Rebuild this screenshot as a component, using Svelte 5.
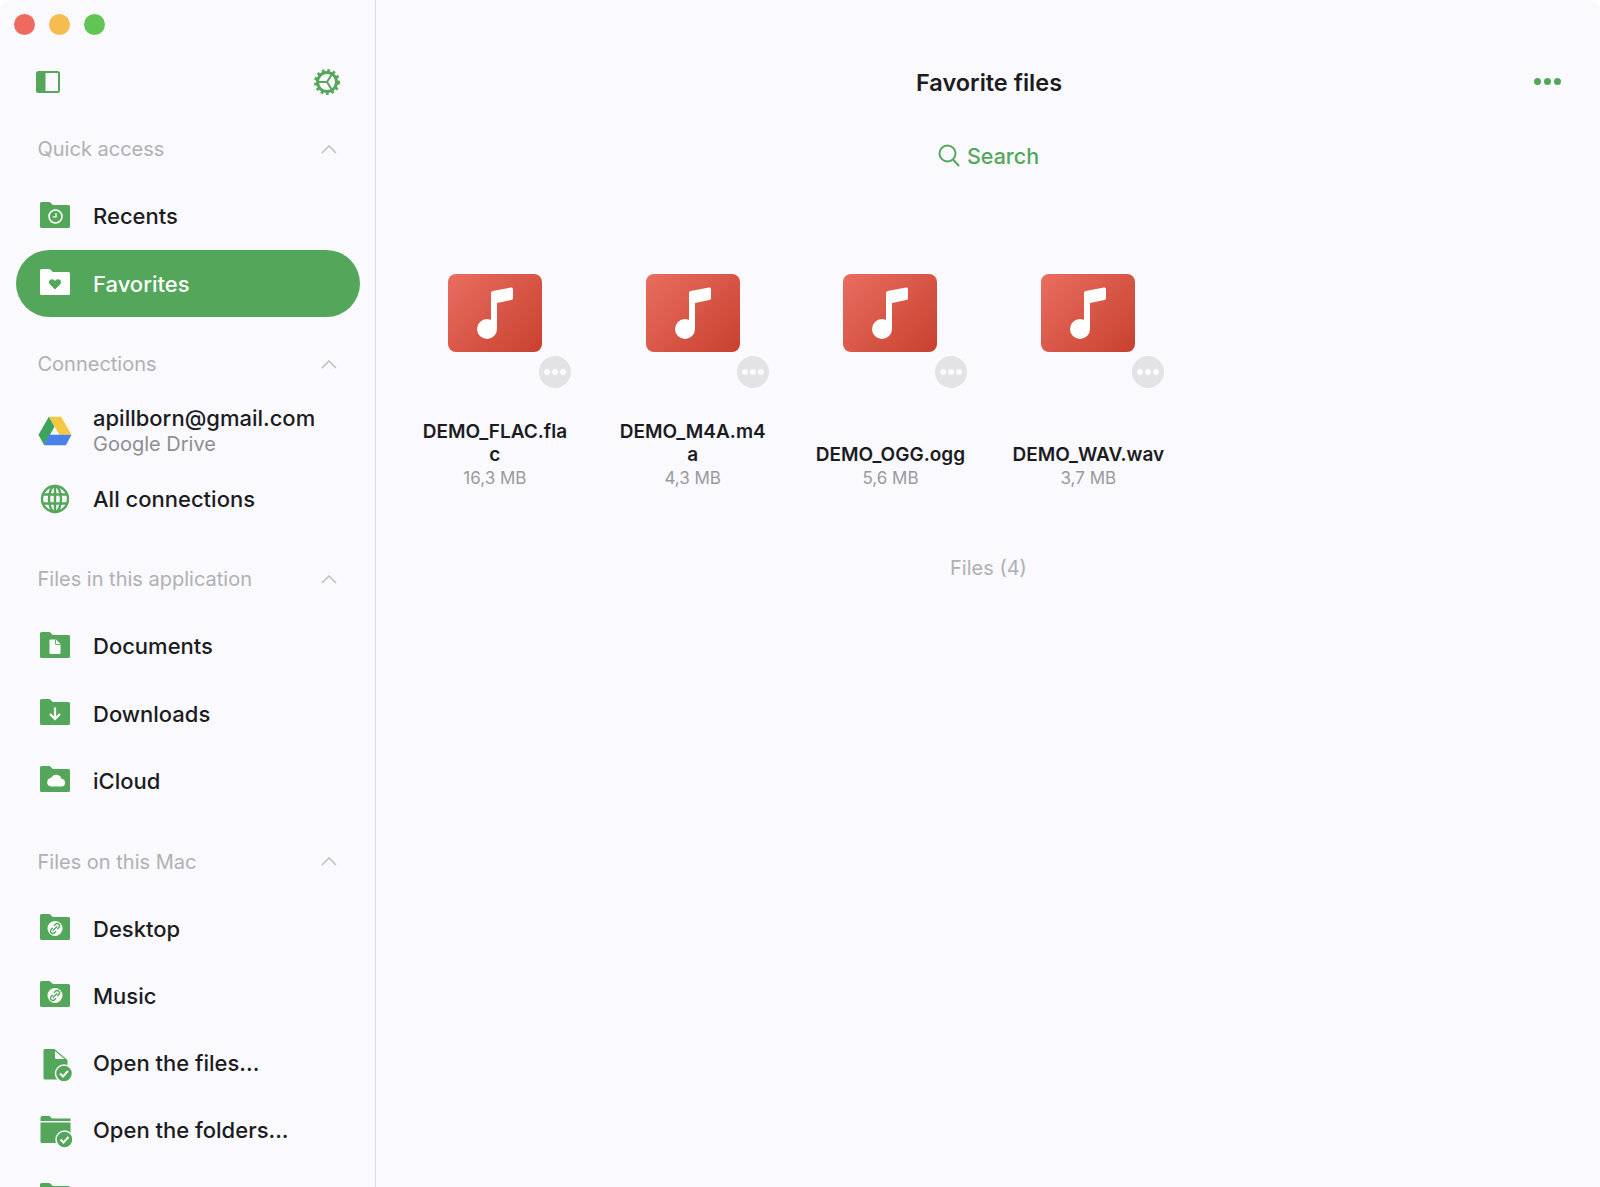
<script lang="ts">
  const sections = [
    { title: 'Quick access', items: [
      { icon: 'clock', label: 'Recents' },
      { icon: 'heart', label: 'Favorites', active: true }
    ] },
    { title: 'Connections', items: [
      { icon: 'drive', label: 'apillborn@gmail.com', sub: 'Google Drive' },
      { icon: 'globe', label: 'All connections' }
    ] },
    { title: 'Files in this application', items: [
      { icon: 'doc', label: 'Documents' },
      { icon: 'down', label: 'Downloads' },
      { icon: 'cloud', label: 'iCloud' }
    ] },
    { title: 'Files on this Mac', items: [
      { icon: 'link', label: 'Desktop' },
      { icon: 'link', label: 'Music' },
      { icon: 'filecheck', label: 'Open the files...' },
      { icon: 'foldercheck', label: 'Open the folders...' },
      { icon: 'plain', label: '' }
    ] }
  ];

  const files = [
    { name: 'DEMO_FLAC.flac', size: '16,3 MB' },
    { name: 'DEMO_M4A.m4a', size: '4,3 MB' },
    { name: 'DEMO_OGG.ogg', size: '5,6 MB' },
    { name: 'DEMO_WAV.wav', size: '3,7 MB' }
  ];

  const folderIcons = ['clock', 'heart', 'doc', 'down', 'cloud', 'link', 'plain'];
</script>

{#snippet rowIcon(icon, active)}
  {#if folderIcons.includes(icon)}
    {@const ink = active ? '#54a75a' : '#fff'}
    <svg class="folder" class:on={active} width="30" height="26" viewBox="0 0 30 26">
      <path class="body" d="M1.500 0h7.600c.5 0 .9.2 1.200.5L12.800 3H28.500a1.500 1.500 0 0 1 1.500 1.500v20a1.500 1.500 0 0 1-1.500 1.500h-27A1.500 1.500 0 0 1 0 24.500v-23A1.500 1.500 0 0 1 1.500 0z" />
      {#if icon === 'clock'}
        <circle cx="15.500" cy="14.500" r="6.500" fill="none" stroke={ink} stroke-width="1.600" />
        <path d="M16 11v3.800h-3.200" fill="none" stroke={ink} stroke-width="1.300" />
      {:else if icon === 'heart'}
        <path d="M15 20.500l-5-4.900c-1.500-1.600-1.400-3.800.2-4.900 1.600-1 3.600-.5 4.800 1.200 1.200-1.700 3.200-2.200 4.800-1.200 1.600 1.100 1.700 3.300.2 4.900z" fill={ink} />
      {:else if icon === 'doc'}
        <path d="M9.500 8.500a1 1 0 0 1 1-1h5.500l4.500 4.500v9a1 1 0 0 1-1 1h-9a1 1 0 0 1-1-1z" fill={ink} />
        <path d="M15.500 7.500v5h5" fill="none" stroke="#54a75a" stroke-width=".9" />
      {:else if icon === 'down'}
        <path d="M15 8.500v11M10 15l5 5 5-5" fill="none" stroke={ink} stroke-width="2.200" />
      {:else if icon === 'cloud'}
        <path d="M11 20.500h10a3.800 3.800 0 0 0 .6-7.600 5.600 5.600 0 0 0-10.400-1.100A4.400 4.400 0 0 0 7.200 16.500 4.200 4.200 0 0 0 11 20.500z" fill={ink} />
      {:else if icon === 'link'}
        <circle cx="15" cy="14.500" r="7.500" fill={ink} />
        <g fill="none" stroke="#54a75a" stroke-width="1.400" stroke-linecap="round">
          <path d="M13.200 16.300l3.600-3.600" />
          <path d="M12.400 14.200l-1.200 1.300a2.300 2.300 0 0 0 3.300 3.300l1.200-1.200" />
          <path d="M17.600 14.800l1.200-1.300a2.300 2.300 0 0 0-3.300-3.300l-1.200 1.200" />
        </g>
      {/if}
    </svg>
  {:else if icon === 'drive'}
    <svg width="36" height="32" viewBox="0 0 36 32">
      <path d="M11.500 1h13L35.500 20h-12.800z" fill="#f5c842" />
      <path d="M11.500 1L0.500 20l6 11 11-19.500z" fill="#3fa45b" />
      <path d="M11.500 20h24l-6 11H6.500z" fill="#4a80ec" />
    </svg>
  {:else if icon === 'globe'}
    <svg width="30" height="30" viewBox="0 0 30 30" fill="none" stroke="#54a75a" stroke-width="2.400">
      <circle cx="15" cy="15" r="13" />
      <ellipse cx="15" cy="15" rx="6" ry="13" />
      <path d="M15 2v26M3 10.500h24M3 19.500h24" />
    </svg>
  {:else if icon === 'filecheck'}
    <svg class="check-icon" width="33" height="33" viewBox="0 0 33 33">
      <path d="M4.500 1.500A1.500 1.500 0 0 1 6 0h9.500L28.500 11v18a1.500 1.500 0 0 1-1.500 1.500H6A1.500 1.500 0 0 1 4.500 29z" fill="#54a75a" />
      <path d="M16 2v6.500a1.500 1.500 0 0 0 1.500 1.500h8z" fill="#f9f9fe" />
      <circle cx="25" cy="24.500" r="8.500" fill="#54a75a" stroke="#f9f9fe" stroke-width="1.500" />
      <path d="M21 24.500l3 3 5-5.500" fill="none" stroke="#fff" stroke-width="2" />
    </svg>
  {:else if icon === 'foldercheck'}
    <svg class="check-icon" width="33" height="33" viewBox="0 0 33 33">
      <path d="M1.500 1.500A1.500 1.500 0 0 1 3 0h7.500l2.500 2.500h18.500v2.500H1.500z" fill="#54a75a" />
      <path d="M1.500 6.500h30V25.500a1.500 1.500 0 0 1-1.500 1.500H3a1.500 1.500 0 0 1-1.500-1.500z" fill="#54a75a" />
      <circle cx="25.500" cy="23.500" r="8.500" fill="#54a75a" stroke="#f9f9fe" stroke-width="1.500" />
      <path d="M21.500 23.500l3 3 5-5.500" fill="none" stroke="#fff" stroke-width="2" />
    </svg>
  {/if}
{/snippet}

<div class="window">
  <aside class="sidebar">
    <div class="lights">
      <span class="light red"></span>
      <span class="light yellow"></span>
      <span class="light green"></span>
    </div>
    <div class="toolbar">
      <svg width="24" height="22" viewBox="0 0 24 22">
        <rect x="1" y="1" width="22" height="20" rx="1.500" fill="#f9f9fe" stroke="#54a75a" stroke-width="2" />
        <rect x="1" y="1" width="8.500" height="20" fill="#54a75a" />
      </svg>
      <svg class="gear" width="26" height="26" viewBox="0 0 26 26" fill="none" stroke="#54a75a">
        <circle cx="13" cy="13" r="9.500" stroke-width="3" />
        <circle cx="13" cy="13" r="11.500" stroke-width="3" stroke-dasharray="2.600 2.820" />
        <path d="M13 13H4M13 13l5 -8M13 13l5 8" stroke-width="2" />
      </svg>
    </div>

    {#each sections as section}
      <section class="group">
        <div class="group-head">
          <span>{section.title}</span>
          <svg width="16" height="9" viewBox="0 0 16 9" fill="none" stroke="#b9b9bd" stroke-width="1.300">
            <path d="M1 8l7-7 7 7" />
          </svg>
        </div>
        {#each section.items as item}
          <div class="row" class:active={item.active}>
            <span class="row-icon">{@render rowIcon(item.icon, item.active)}</span>
            <div class="row-text">
              <span class="label">{item.label}</span>
              {#if item.sub}<span class="sub">{item.sub}</span>{/if}
            </div>
          </div>
        {/each}
      </section>
    {/each}
  </aside>

  <main class="content">
    <header class="topbar">
      <h1>Favorite files</h1>
      <span class="more"><i></i><i></i><i></i></span>
    </header>
    <div class="search">
      <svg width="22" height="23" viewBox="0 0 22 23" fill="none" stroke="#54a75a" stroke-width="2">
        <circle cx="9.500" cy="9.500" r="8" />
        <path d="M15 15.500l6 6.500" />
      </svg>
      <span>Search</span>
    </div>

    <div class="grid">
      {#each files as file}
        <div class="tile">
          <div class="thumb">
            <svg width="36" height="52" viewBox="0 0 36 52">
              <path d="M14 6a2 2 0 0 1 1.600-2L34 .5a1.700 1.700 0 0 1 2 1.700V11a2 2 0 0 1-1.600 2L20 16V42h-6z" fill="#fff" />
              <circle cx="10" cy="42" r="10" fill="#fff" />
            </svg>
          </div>
          <span class="tile-more"><i></i><i></i><i></i></span>
          <div class="name">{file.name}</div>
          <div class="size">{file.size}</div>
        </div>
      {/each}
    </div>

    <div class="count">Files (4)</div>
  </main>
</div>

<style>
  :global(body) {
    background: #fff;
  }
  .window {
    display: flex;
    width: 1600px;
    height: 1187px;
    overflow: hidden;
    background: #f9f9fe;
    border-radius: 10px 10px 0 0;
    font-family: Inter, "Liberation Sans", sans-serif;
  }
  .sidebar {
    width: 375px;
    flex: none;
    box-sizing: content-box;
    border-right: 1.500px solid #dcdce0;
    overflow: hidden;
  }
  .lights {
    display: flex;
    gap: 14px;
    height: 48.400px;
    padding-left: 14px;
    padding-top: 14px;
    box-sizing: border-box;
  }
  .light {
    width: 21px;
    height: 21px;
    border-radius: 50%;
  }
  .red { background: #ee6a5f; }
  .yellow { background: #f5bd4f; }
  .green { background: #61c554; }
  .toolbar {
    display: flex;
    align-items: center;
    justify-content: space-between;
    height: 67.200px;
    padding: 0 35px 0 36px;
  }
  .group + .group {
    margin-top: 13.500px;
  }
  .group-head {
    display: flex;
    align-items: center;
    justify-content: space-between;
    height: 67.200px;
    padding: 0 38px 0 37.500px;
    font-size: 20px;
    color: #b0b0b4;
  }
  .row {
    display: flex;
    align-items: center;
    height: 67.200px;
    margin: 0 15px 0 16px;
    padding-left: 22px;
    border-radius: 34px;
    color: #1c1c1e;
  }
  .row.active {
    background: #54a75a;
    color: #fff;
  }
  .row-icon {
    display: flex;
    justify-content: center;
    width: 34px;
    margin-right: 21px;
  }
  .row-text {
    display: flex;
    flex-direction: column;
  }
  .label {
    font-size: 22px;
    font-weight: 500;
    line-height: 26px;
  }
  .sub {
    font-size: 20px;
    line-height: 26px;
    color: #8e8e93;
  }
  .folder {
    margin-top: -3px;
  }
  .check-icon {
    margin-top: 4px;
  }
  .folder .body {
    fill: #54a75a;
  }
  .folder.on .body {
    fill: #fff;
  }
  .content {
    flex: 1;
    min-width: 0;
    padding-top: 66px;
  }
  .topbar {
    position: relative;
    text-align: center;
  }
  h1 {
    margin: 0;
    padding-left: 2px;
    font-size: 23.500px;
    font-weight: 600;
    line-height: 34px;
    color: #1c1c1e;
  }
  .more {
    position: absolute;
    right: 39px;
    top: 12px;
    display: flex;
    gap: 3px;
  }
  .more i {
    width: 7px;
    height: 7px;
    border-radius: 50%;
    background: #54a75a;
  }
  .search {
    display: flex;
    align-items: center;
    justify-content: center;
    gap: 7px;
    height: 34px;
    margin-top: 38.500px;
    padding-left: 1px;
    font-size: 21.500px;
    font-weight: 500;
    color: #54a75a;
  }
  .grid {
    display: flex;
    margin-top: 101.500px;
    padding-left: 20px;
  }
  .tile {
    position: relative;
    display: flex;
    flex-direction: column;
    align-items: center;
    width: 197.800px;
  }
  .thumb {
    display: flex;
    align-items: center;
    justify-content: center;
    width: 94px;
    height: 78px;
    border-radius: 8px;
    background: linear-gradient(135deg, #e96d60, #c8412f);
  }
  .tile-more {
    position: absolute;
    left: 143px;
    top: 82px;
    display: flex;
    align-items: center;
    justify-content: center;
    gap: 2px;
    width: 32px;
    height: 32px;
    border-radius: 50%;
    background: #e3e3e6;
  }
  .tile-more i {
    width: 6px;
    height: 6px;
    border-radius: 50%;
    background: #f9f9fe;
  }
  .name {
    display: flex;
    align-items: flex-end;
    justify-content: center;
    width: 153px;
    height: 46px;
    margin-top: 68px;
    font-size: 19px;
    font-weight: 600;
    line-height: 23px;
    text-align: center;
    word-break: break-all;
    color: #1c1c1e;
  }
  .size {
    margin-top: 1px;
    font-size: 17px;
    line-height: 22px;
    color: #9a9a9f;
  }
  .count {
    margin-top: 67px;
    padding-left: 1px;
    text-align: center;
    font-size: 20px;
    color: #b0b0b4;
  }
</style>
